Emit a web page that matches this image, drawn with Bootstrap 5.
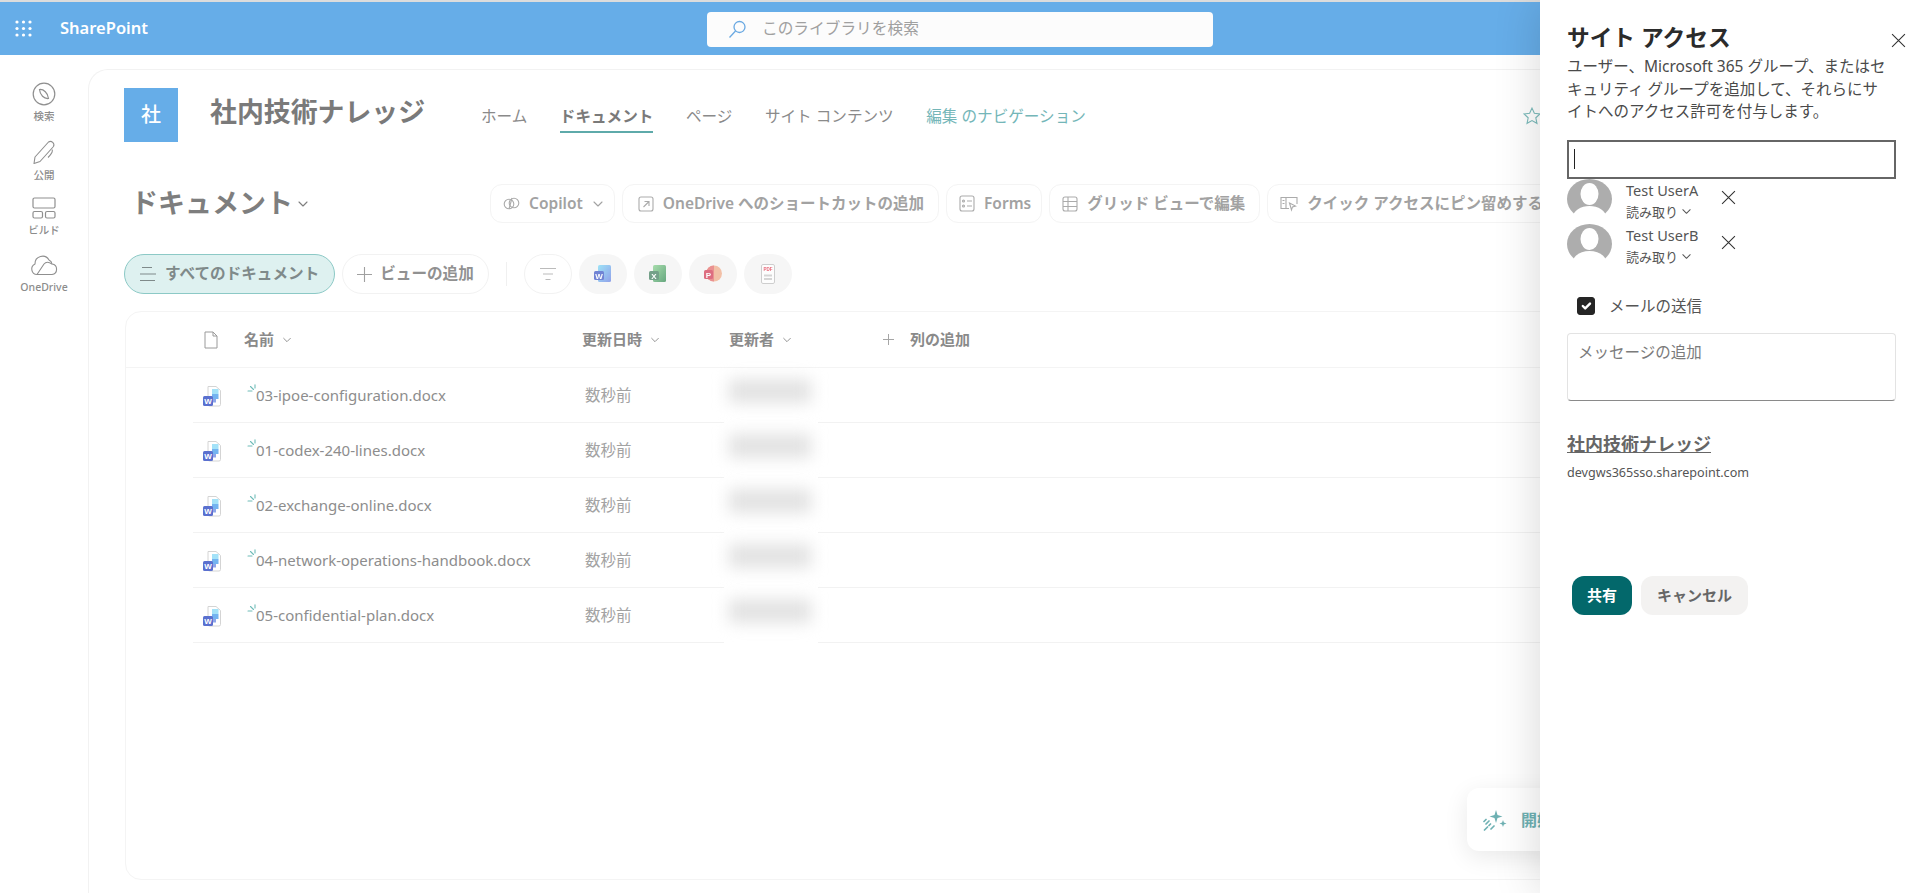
<!DOCTYPE html>
<html lang="ja">
<head>
    <meta charset="UTF-8">
    <meta name="viewport" content="width=device-width, initial-scale=1.0">
    <title>ドキュメント - 社内技術ナレッジ</title>
    <link href="https://cdn.jsdelivr.net/npm/bootstrap@5.3.0/dist/css/bootstrap.min.css" rel="stylesheet">
    <style>
        html, body { height: 893px; overflow: hidden; }
        body { font-family: "Noto Sans", "Noto Sans CJK JP", sans-serif; color: #808080; background: #fff; position: relative; }
        svg { display: block; flex-shrink: 0; }

        .top-bar { height: 55px; border-top: 2px solid #dcdcdc; background: #66ade8; color: #fff; }
        .waffle { margin-left: 15px; }
        .brand { margin-left: 28px; font-size: 16.5px; font-weight: 600; width: 647px; }
        .search-box { width: 506px; height: 35px; margin-top: 1px; background: #fcfcfc; border-radius: 4px; padding-left: 21px; color: #a0a0a0; font-size: 15.7px; }
        .search-box span { margin-left: 15px; }

        .rail { width: 88px; padding-top: 27px; }
        .rail-item { height: 57px; font-size: 10.5px; font-weight: 500; color: #8c8c8c; line-height: 14px; gap: 3px; }
        .site-card { width: 1600px; height: 824px; margin-top: 14px; padding: 18px 0 0 35px; border: 1px solid #f2f2f2; border-width: 1px 0 0 1px; border-radius: 20px 0 0 0; }

        .site-logo { width: 54px; height: 54px; background: #66ade8; color: #fff; font-size: 20px; font-weight: 500; }
        .site-title { margin: -6px 0 0 32px; width: 271px; font-size: 26.9px; font-weight: 600; color: #7a7a7a; white-space: nowrap; }
        .site-nav { gap: 32.5px; margin-top: 4px; font-size: 15.6px; color: #8a8a8a; }
        .site-nav span { padding: 2px 0 3px; margin-top: 2px; border-bottom: 2px solid transparent; white-space: nowrap; }
        .site-nav .here { font-weight: 600; color: #7a7a7a; border-bottom-color: #5eaaaa; }
        .site-nav .edit { color: #74b6b8; }
        .fav-star { margin-left: 437px; margin-top: 2px; }

        .doc-head { margin-top: 42px; height: 39px; }
        .doc-title { width: 366px; padding-left: 7px; font-size: 27px; font-weight: 600; color: #7e7e7e; gap: 4px; white-space: nowrap; }
        .cmd-list { gap: 7px; }
        .cmd-item { height: 39px; padding: 0 14px 0 12px; border: 1px solid #f4f4f4; border-radius: 12px; font-size: 15.5px; font-weight: 600; color: #a2a2a2; gap: 9px; white-space: nowrap; }
        .cmd-item.tight { padding-right: 10px; }
        .cmd-item.wide { padding-left: 15px; }

        .view-row { margin-top: 31px; height: 40px; gap: 7px; }
        .view-pill { height: 40px; padding: 0 14px; border: 1px solid #f2f2f2; border-radius: 20px; font-size: 15.6px; font-weight: 600; color: #919191; gap: 8px; white-space: nowrap; }
        .view-pill.active { background: #def1f0; border-color: #8cc9c6; color: #7f8a8a; padding: 0 15px 0 14px; }
        .view-sep { width: 1px; height: 24px; background: #f0f0f0; margin: 0 10px; }
        .round-btn { width: 48px; height: 40px; border-radius: 20px; background: #f6f6f6; }
        .round-btn svg { opacity: .85; }
        .round-btn.plain { background: #fff; border: 1px solid #f2f2f2; }

        .files-card { margin: 17px 0 0 1px; width: 1500px; height: 569px; border: 1px solid #f4f4f4; border-radius: 16px; }
        .files-head { height: 56px; padding-left: 78px; border-bottom: 1px solid #f4f4f4; display: grid; grid-template-columns: 40px 338px 147px 154px 1fr; align-items: center; font-size: 15px; font-weight: 600; color: #8a8a8a; }
        .head-cell { gap: 8px; white-space: nowrap; }
        .files-row { margin-left: 67px; height: 55px; border-bottom: 1px solid #f2f2f2; display: grid; grid-template-columns: 62px 330px 142px 100px 1fr; align-items: center; font-size: 15px; color: #8d8d8d; }
        .file-icon { padding-left: 9px; }
        .file-name { white-space: nowrap; }
        .spark { margin: -11px -3px 0 -8px; }
        .file-date { font-size: 15.5px; color: #a3a3a3; }
        .author-cell { width: 94px; height: 56px; background: #fff; margin: 0 0 -1px -3px; padding-left: 5px; }
        .author-blur { width: 82px; height: 24px; margin-top: -10px; background: #e2e2e2; filter: blur(8px); }

        .float-tip { position: absolute; left: 1467px; top: 788px; width: 120px; height: 63px; padding-left: 16px; background: #fff; border-radius: 12px; box-shadow: 0 6px 24px rgba(0,0,0,.09); color: #6eb1b3; font-size: 16px; font-weight: 600; gap: 14px; white-space: nowrap; }

        .share-panel { position: absolute; top: 0; right: 0; width: 380px; height: 893px; padding: 23px 24px 0 27px; background: #fff; box-shadow: 0 0 44px rgba(0,0,0,.16); color: #444; }
        .share-title { font-size: 22.7px; line-height: 30px; font-weight: 700; color: #2b2b2b; }
        .share-close { margin: 10px -10px 0 0; }
        .share-desc { margin: 2px 0 17px; font-size: 15.5px; line-height: 22.5px; color: #4a4a4a; white-space: nowrap; }
        .people-input { height: 39px; border: 2px solid #666; border-radius: 0; box-shadow: none; }
        .input-caret { position: absolute; left: 7px; top: 9px; width: 1px; height: 20px; background: #222; }
        .person-row { height: 45px; font-size: 14.5px; color: #555; }
        .person-text { margin-left: 14px; width: 92px; line-height: 22px; }
        .person-role { font-size: 13px; gap: 3px; }
        .person-x { margin: 11px 0 0 3px; }
        .mail-check { margin: 26px 0 15px 10px; padding: 0; min-height: 0; gap: 14px; font-size: 15.5px; color: #555; }
        .mail-check .form-check-input { float: none; margin: 0; width: 18px; height: 18px; background-color: #252525; border-color: #252525; border-radius: 3px; }
        .msg-box { height: 68px; padding: 6px 10px; font-size: 15.5px; line-height: 24px; border: 1px solid #e3e3e3; border-bottom-color: #8a8a8a; border-radius: 4px; resize: none; }
        .msg-box::placeholder { color: #7b7b7b; }
        .site-link { display: inline-block; margin-top: 30px; font-size: 18px; line-height: 26px; font-weight: 700; color: #666; }
        .site-domain { margin-top: 6px; font-size: 12.6px; line-height: 20px; color: #555; }
        .share-actions { margin: 93px 0 0 5px; gap: 9px; }
        .btn-share { width: 60px; height: 39px; padding: 0; border: 0; border-radius: 12px; background: #03686b; color: #fff; font-size: 15px; font-weight: 700; }
        .btn-share:hover { background: #03686b; color: #fff; }
        .btn-cancel { width: 107px; height: 39px; padding: 0; border: 0; border-radius: 12px; background: #f3f2f1; color: #666; font-size: 15px; font-weight: 700; }
    </style>
</head>
<body>

<svg width="0" height="0" class="position-absolute">
    <defs>
        <linearGradient id="gWord" x1="0" y1="0" x2="1" y2="1"><stop offset="0" stop-color="#8fe0f7"/><stop offset="1" stop-color="#7f93e8"/></linearGradient>
        <linearGradient id="gExcel" x1="0" y1="0" x2="1" y2="1"><stop offset="0" stop-color="#9ad9a0"/><stop offset="1" stop-color="#4e9a6b"/></linearGradient>
        <symbol id="docRowIcon" viewBox="0 0 20 24">
            <path d="M6 2.500h8l4.500 4v14a1.500 1.500 0 0 1-1.500 1.500H7.500A1.500 1.500 0 0 1 6 20.500z" fill="#fff" stroke="#d4d4d4"/>
            <rect x="10" y="5" width="6.500" height="5" fill="#a3e2f8"/>
            <rect x="10" y="10" width="6.500" height="5" fill="#73b4f0"/>
            <rect x="10" y="15" width="4" height="3.500" fill="#8ea5ea"/>
            <rect x="1" y="12" width="10" height="10" rx="1.500" fill="#5a70cf"/>
            <text x="6" y="20" font-size="8" font-weight="700" fill="#fff" text-anchor="middle" font-family="Liberation Sans, sans-serif">W</text>
        </symbol>
        <symbol id="sparkIcon" viewBox="0 0 12 12" fill="none" stroke="#6fbcb8" stroke-width="1.100" stroke-linecap="round">
            <path d="M1 7h4M3.500 2.500 6.500 5.500M8 .8V4"/>
        </symbol>
        <symbol id="chevDown" viewBox="0 0 12 12" fill="none" stroke="currentColor" stroke-width="1.100" stroke-linecap="round" stroke-linejoin="round">
            <path d="M2 4l4 4 4-4"/>
        </symbol>
        <symbol id="avatarIcon" viewBox="0 0 45 40">
            <ellipse cx="22.500" cy="20" rx="22.500" ry="20" fill="#adadad"/>
            <ellipse cx="22.500" cy="15" rx="9" ry="11" fill="#fff"/>
            <path d="M5 40c1-9 9-13 17.500-13S39 31 40 40z" fill="#fff"/>
        </symbol>
        <symbol id="closeX" viewBox="0 0 14 14" fill="none" stroke="#333" stroke-width="1">
            <path d="M1 1l12 12M13 1 1 13"/>
        </symbol>
    </defs>
</svg>

<!-- ヘッダー -->
<header class="top-bar d-flex align-items-center">
    <svg class="waffle" width="17" height="17" viewBox="0 0 17 17" fill="#fff">
        <circle cx="2" cy="2" r="1.600"/><circle cx="8.500" cy="2" r="1.600"/><circle cx="15" cy="2" r="1.600"/>
        <circle cx="2" cy="8.500" r="1.600"/><circle cx="8.500" cy="8.500" r="1.600"/><circle cx="15" cy="8.500" r="1.600"/>
        <circle cx="2" cy="15" r="1.600"/><circle cx="8.500" cy="15" r="1.600"/><circle cx="15" cy="15" r="1.600"/>
    </svg>
    <div class="brand">SharePoint</div>
    <div class="search-box d-flex align-items-center">
        <svg width="19" height="19" viewBox="0 0 19 19" fill="none" stroke="#6aa9e2" stroke-width="1.300"><circle cx="11.500" cy="7" r="5.500"/><path d="M7.500 11 1.500 17.500"/></svg>
        <span>このライブラリを検索</span>
    </div>
</header>

<div class="d-flex">
    <!-- 左レール -->
    <nav class="rail d-flex flex-column align-items-center flex-shrink-0">
        <div class="rail-item d-flex flex-column align-items-center">
            <svg width="24" height="24" viewBox="0 0 24 24" fill="none" stroke="#8f8f8f" stroke-width="1.200"><circle cx="12" cy="12" r="10.800"/><path d="M7.500 7.500c4-.5 8.500 3.500 9 9-4.500.5-8.500-3.500-9-9z"/></svg>
            <span>検索</span>
        </div>
        <div class="rail-item d-flex flex-column align-items-center">
            <svg width="24" height="26" viewBox="0 0 24 26" fill="none" stroke="#8f8f8f" stroke-width="1.100" stroke-linejoin="round"><path d="M2 24.500 3 18 16.500 3a3.500 3.500 0 0 1 5 4.500L8 22.500z"/><path d="M20 10.500c1.500 2-1 5-4 8"/></svg>
            <span>公開</span>
        </div>
        <div class="rail-item d-flex flex-column align-items-center">
            <svg width="24" height="24" viewBox="0 0 24 24" fill="none" stroke="#8f8f8f" stroke-width="1.200"><rect x="1" y="2" width="22" height="10" rx="1.500"/><rect x="1" y="15.500" width="9.500" height="6.500" rx="1.500"/><rect x="13.500" y="15.500" width="9.500" height="6.500" rx="1.500"/></svg>
            <span>ビルド</span>
        </div>
        <div class="rail-item d-flex flex-column align-items-center">
            <svg width="28" height="24" viewBox="0 0 28 24" fill="none" stroke="#8f8f8f" stroke-width="1.100" stroke-linejoin="round"><path d="M7 21.500a5.500 5.500 0 0 1-2-10.500 7.500 7.500 0 0 1 14-4 5 5 0 0 1 3 4 5.300 5.300 0 0 1 0 10.500z"/><path d="M7 21.500 14 11c2-2.500 5-2 8 0"/></svg>
            <span>OneDrive</span>
        </div>
    </nav>

    <main class="site-card flex-shrink-0">
        <!-- サイトヘッダー -->
        <div class="d-flex align-items-center">
            <div class="site-logo d-flex align-items-center justify-content-center">社</div>
            <div class="site-title">社内技術ナレッジ</div>
            <div class="site-nav d-flex align-items-center">
                <span>ホーム</span>
                <span class="here">ドキュメント</span>
                <span>ページ</span>
                <span>サイト コンテンツ</span>
                <span class="edit">編集 のナビゲーション</span>
            </div>
            <svg class="fav-star" width="18" height="18" viewBox="0 0 16 16" fill="none" stroke="#7dbcbc" stroke-width="1"><path d="M8 1l2.100 4.600 5 .6-3.700 3.400 1 4.900L8 12.100l-4.400 2.400 1-4.900L.9 6.200l5-.6z"/></svg>
        </div>

        <!-- コマンドバー -->
        <div class="doc-head d-flex align-items-center">
            <div class="doc-title d-flex align-items-center flex-shrink-0">
                ドキュメント
                <svg width="12" height="12"><use href="#chevDown"/></svg>
            </div>
            <div class="cmd-list d-flex">
                <div class="cmd-item tight d-flex align-items-center">
                    <svg width="17" height="17" viewBox="0 0 17 17" fill="none" stroke="#ababab" stroke-width="1.100"><circle cx="6" cy="9" r="4.800"/><circle cx="11" cy="8" r="4.800"/><path d="M9 3 6 14"/></svg>
                    Copilot
                    <svg width="12" height="12"><use href="#chevDown"/></svg>
                </div>
                <div class="cmd-item wide d-flex align-items-center">
                    <svg width="16" height="16" viewBox="0 0 16 16" fill="none" stroke="#ababab" stroke-width="1.100"><rect x="1" y="1" width="14" height="14" rx="2"/><path d="M5.500 11 11 5.500M6.500 5.500H11V10"/></svg>
                    OneDrive へのショートカットの追加
                </div>
                <div class="cmd-item tight d-flex align-items-center">
                    <svg width="16" height="17" viewBox="0 0 16 17" fill="none" stroke="#ababab" stroke-width="1.100"><rect x="1" y="1" width="14" height="15" rx="2"/><circle cx="4.500" cy="6" r="1"/><circle cx="4.500" cy="11" r="1"/><path d="M8 6h5M8 11h5"/></svg>
                    Forms
                </div>
                <div class="cmd-item d-flex align-items-center">
                    <svg width="16" height="16" viewBox="0 0 16 16" fill="none" stroke="#ababab" stroke-width="1.100"><rect x="1" y="1" width="14" height="14" rx="2"/><path d="M1 5.500h14M1 10.500h14M6 1v14"/></svg>
                    グリッド ビューで編集
                </div>
                <div class="cmd-item d-flex align-items-center">
                    <svg width="18" height="16" viewBox="0 0 18 16" fill="none" stroke="#ababab" stroke-width="1.100"><path d="M9 12.500H1V1.500h16V8M6 1.500v11M2.500 4.500H4.500M2.500 7.500H4.500"/><path d="M9.500 7l6 3-3 .9-1 3z"/></svg>
                    クイック アクセスにピン留めする
                </div>
            </div>
        </div>

        <!-- ビュー切り替え -->
        <div class="view-row d-flex align-items-center">
            <div class="view-pill active d-flex align-items-center">
                <svg width="18" height="16" viewBox="0 0 18 16" fill="none" stroke="#7f8a8a" stroke-width="1.100"><path d="M3 1.500h10M1 8h16M1 14.500h15"/></svg>
                すべてのドキュメント
            </div>
            <div class="view-pill d-flex align-items-center">
                <svg width="15" height="15" viewBox="0 0 15 15" fill="none" stroke="#a0a0a0" stroke-width="1.100"><path d="M7.500 0v15M0 7.500h15"/></svg>
                <span>ビューの追加</span>
            </div>
            <div class="view-sep"></div>
            <div class="round-btn plain d-flex align-items-center justify-content-center">
                <svg width="16" height="14" viewBox="0 0 16 14" fill="none" stroke="#b0b0b0" stroke-width="1.200"><path d="M0 1.500h16M3 7h10M5.500 12.500h5"/></svg>
            </div>
            <div class="round-btn d-flex align-items-center justify-content-center">
                <svg width="18" height="18" viewBox="0 0 18 18"><rect x="4" y="0" width="13" height="17" rx="1.500" fill="url(#gWord)"/><rect x="0" y="6" width="10" height="9" rx="1.500" fill="#5a70cf"/><text x="5" y="13.500" font-size="8" font-weight="700" fill="#fff" text-anchor="middle" font-family="Liberation Sans, sans-serif">W</text></svg>
            </div>
            <div class="round-btn d-flex align-items-center justify-content-center">
                <svg width="18" height="18" viewBox="0 0 18 18"><rect x="4" y="0" width="13" height="17" rx="1.500" fill="url(#gExcel)"/><rect x="0" y="6" width="10" height="9" rx="1.500" fill="#5e9277"/><text x="5" y="13.500" font-size="8" font-weight="700" fill="#fff" text-anchor="middle" font-family="Liberation Sans, sans-serif">X</text></svg>
            </div>
            <div class="round-btn d-flex align-items-center justify-content-center">
                <svg width="18" height="18" viewBox="0 0 18 18"><circle cx="10" cy="8.500" r="8" fill="#f2b79a"/><path d="M10 .5a8 8 0 0 0-8 8 8 8 0 0 0 8 8z" fill="#e98080"/><rect x="0" y="5" width="9" height="9" rx="1.500" fill="#d9566c"/><text x="4.500" y="12.500" font-size="8" font-weight="700" fill="#fff" text-anchor="middle" font-family="Liberation Sans, sans-serif">P</text></svg>
            </div>
            <div class="round-btn d-flex align-items-center justify-content-center">
                <svg width="14" height="20" viewBox="0 0 14 20"><rect x=".5" y=".5" width="13" height="19" rx="1.500" fill="#fff" stroke="#c8c8c8"/><text x="7" y="7" font-size="4.500" font-weight="700" fill="#e4475c" text-anchor="middle" font-family="Liberation Sans, sans-serif">PDF</text><path d="M3 10.500h8v2H3zM3 14h8v2H3z" fill="#d0d0d0"/></svg>
            </div>
        </div>

        <!-- ファイル一覧 -->
        <div class="files-card" id="filesCard">
            <div class="files-head">
                <svg width="14" height="18" viewBox="0 0 14 18" fill="none" stroke="#9a9a9a" stroke-width="1"><path d="M1 1h8l4 4v12H1zM9 1v4h4"/></svg>
                <div class="head-cell d-flex align-items-center">名前 <svg width="10" height="10"><use href="#chevDown"/></svg></div>
                <div class="head-cell d-flex align-items-center">更新日時 <svg width="10" height="10"><use href="#chevDown"/></svg></div>
                <div class="head-cell d-flex align-items-center">更新者 <svg width="10" height="10"><use href="#chevDown"/></svg></div>
                <div class="head-cell d-flex align-items-center">
                    <svg width="11" height="11" viewBox="0 0 11 11" fill="none" stroke="#a6a6a6" stroke-width="1"><path d="M5.500 0v11M0 5.500h11"/></svg>
                    <span class="ms-2">列の追加</span>
                </div>
            </div>
        </div>
    </main>
</div>

<div class="float-tip d-flex align-items-center">
    <svg width="24" height="22" viewBox="0 0 24 22" fill="#6eb1b3"><path d="M13 1l1.500 5 5 1.500-5 1.500-1.500 5-1.500-5-5-1.500 5-1.500zM20 11l.9 2.600L23.500 14.500l-2.600.9L20 18l-.9-2.600-2.600-.9 2.600-.9z"/><path d="M1.500 21l3-3M6 16.500l1.500-1.500M3 15l3-3M8 20l3-3M1 12.500 3 10.500" stroke="#6eb1b3" stroke-width="1.700" stroke-linecap="round" fill="none"/></svg>
    <span>開始する</span>
</div>

<!-- 共有パネル -->
<aside class="share-panel">
    <div class="d-flex justify-content-between align-items-start">
        <div class="share-title">サイト アクセス</div>
        <svg class="share-close" width="15" height="15"><use href="#closeX"/></svg>
    </div>
    <p class="share-desc">ユーザー、Microsoft 365 グループ、またはセ<br>キュリティ グループを追加して、それらにサ<br>イトへのアクセス許可を付与します。</p>
    <div class="position-relative">
        <input type="text" class="form-control people-input" aria-label="ユーザーの追加">
        <div class="input-caret"></div>
    </div>
    <div class="person-row d-flex align-items-start">
        <svg width="45" height="40"><use href="#avatarIcon"/></svg>
        <div class="person-text">
            <div>Test UserA</div>
            <div class="person-role d-flex align-items-center">読み取り <svg width="11" height="11"><use href="#chevDown"/></svg></div>
        </div>
        <svg class="person-x" width="15" height="15"><use href="#closeX"/></svg>
    </div>
    <div class="person-row d-flex align-items-start">
        <svg width="45" height="40"><use href="#avatarIcon"/></svg>
        <div class="person-text">
            <div>Test UserB</div>
            <div class="person-role d-flex align-items-center">読み取り <svg width="11" height="11"><use href="#chevDown"/></svg></div>
        </div>
        <svg class="person-x" width="15" height="15"><use href="#closeX"/></svg>
    </div>
    <label class="form-check mail-check d-flex align-items-center">
        <input class="form-check-input" type="checkbox" checked>
        <span class="form-check-label">メールの送信</span>
    </label>
    <textarea class="form-control msg-box" placeholder="メッセージの追加"></textarea>
    <a href="#" class="site-link">社内技術ナレッジ</a>
    <div class="site-domain">devgws365sso.sharepoint.com</div>
    <div class="share-actions d-flex">
        <button type="button" class="btn btn-share">共有</button>
        <button type="button" class="btn btn-cancel">キャンセル</button>
    </div>
</aside>

<script>
    // 一覧の行
    const files = [
        "03-ipoe-configuration.docx",
        "01-codex-240-lines.docx",
        "02-exchange-online.docx",
        "04-network-operations-handbook.docx",
        "05-confidential-plan.docx"
    ];
    const card = document.getElementById("filesCard");
    files.forEach(name => {
        const row = document.createElement("div");
        row.className = "files-row";
        row.innerHTML = `
            <div class="file-icon"><svg width="20" height="24"><use href="#docRowIcon"/></svg></div>
            <div class="file-name d-flex align-items-center">
                <svg class="spark" width="12" height="12"><use href="#sparkIcon"/></svg>
                <span>${name}</span>
            </div>
            <div class="file-date">数秒前</div>
            <div class="author-cell d-flex align-items-center"><div class="author-blur"></div></div>
            <div></div>
        `;
        card.appendChild(row);
    });
</script>
<script src="https://cdn.jsdelivr.net/npm/bootstrap@5.3.0/dist/js/bootstrap.bundle.min.js"></script>
</body>
</html>
